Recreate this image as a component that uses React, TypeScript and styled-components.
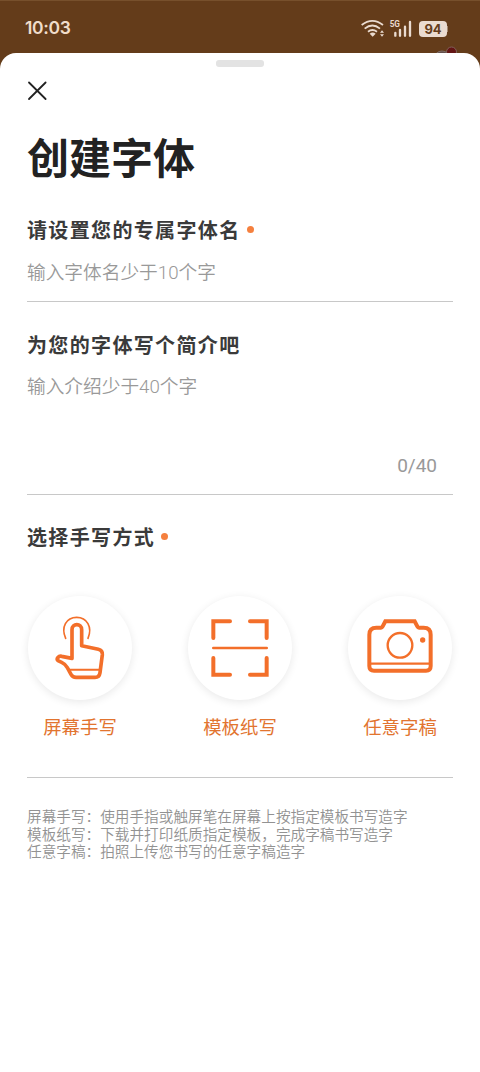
import React from "react";
import styled, { createGlobalStyle } from "styled-components";

const ORANGE = "#f36f2a";

const GlobalStyle = createGlobalStyle`
  * { box-sizing: border-box; }
  body {
    margin: 0;
    background: #643c1a;
    font-family: Roboto, "Noto Sans CJK SC", sans-serif;
  }
`;

const Screen = styled.div`
  width: 480px;
  height: 1072px;
  display: flex;
  flex-direction: column;
  overflow: hidden;
  background: #643c1a;
`;

const StatusBar = styled.header`
  position: relative;
  flex: none;
  height: 53px;
  padding: 2px 33px 0 25px;
  display: flex;
  align-items: center;
  justify-content: space-between;
  box-shadow: inset 0 1px 0 #77502c;
`;

const Clock = styled.span`
  font: 600 17.5px/24px Inter, sans-serif;
  letter-spacing: -0.3px;
  color: #f0dcca;
`;

const StatusIcons = styled.div`
  display: flex;
  align-items: center;
  height: 20px;
`;

const Battery = styled.div`
  position: relative;
  width: 28px;
  height: 16px;
  margin-left: 7px;
  margin-top: 2px;
  border-radius: 4px;
  background: #eadbd0;
  color: #643c1a;
  font: 700 13px/16.5px Inter, sans-serif;
  letter-spacing: -0.2px;
  text-align: center;
  &::after {
    content: "";
    position: absolute;
    right: -1px;
    top: 5px;
    width: 1px;
    height: 6px;
    background: #a58a73;
  }
`;

const HiddenBadge = styled.svg`
  position: absolute;
  left: 434px;
  top: 45px;
`;

const Sheet = styled.main`
  position: relative;
  flex: 1;
  display: flex;
  flex-direction: column;
  padding: 7px 27px 0;
  border-radius: 16px 16px 0 0;
  background: #fff;
`;

const Handle = styled.div`
  flex: none;
  align-self: center;
  width: 48px;
  height: 7px;
  border-radius: 3px;
  background: #e3e3e3;
`;

const CloseButton = styled.button`
  align-self: flex-start;
  width: 20px;
  height: 20px;
  margin-top: 14px;
  padding: 0;
  border: 0;
  background: none;
  svg { display: block; }
`;

const Title = styled.h1`
  margin: 25px 0 2px;
  font: 700 42px/60px "Noto Sans CJK SC", sans-serif;
  color: #222;
`;

const Field = styled.section<{ $height: number; $top: number }>`
  flex: none;
  display: flex;
  flex-direction: column;
  height: ${(p) => p.$height}px;
  padding-top: ${(p) => p.$top}px;
  border-bottom: 1.5px solid #c8c8c8;
`;

const Heading = styled.h2`
  display: flex;
  align-items: center;
  gap: 6px;
  margin: 0;
  font: 700 20px/30px "Noto Sans CJK SC", sans-serif;
  letter-spacing: 1.35px;
  color: #3a3a3a;
`;

const RequiredDot = styled.i`
  width: 7px;
  height: 7px;
  margin-top: -2px;
  border-radius: 50%;
  background: #f5803e;
`;

const Hint = styled.p<{ $top: number }>`
  margin: ${(p) => p.$top}px 0 0;
  font-size: 18.7px;
  font-weight: 350;
  line-height: 24px;
  color: #999;
`;

const Counter = styled.span`
  margin: auto 16px 16px auto;
  font-size: 19px;
  line-height: 24px;
  color: #999;
`;

const Options = styled.div`
  display: flex;
  justify-content: space-between;
  margin: 44px 1px 0;
`;

const Option = styled.button`
  width: 104px;
  padding: 0;
  border: 0;
  background: none;
  display: flex;
  flex-direction: column;
  align-items: center;
  gap: 14px;
  font: 400 18.4px/24px "Noto Sans CJK SC", sans-serif;
  color: #e2742f;
`;

const Disc = styled.span`
  display: block;
  width: 104px;
  height: 104px;
  border-radius: 50%;
  background: #fff;
  box-shadow: 0 2px 8px rgba(0, 0, 0, 0.09);
  svg { display: block; }
`;

const Notes = styled.div`
  margin-top: 29px;
  font: 350 14.65px/17.5px "Noto Sans CJK SC", sans-serif;
  color: #929292;
  white-space: nowrap;
`;

const Note = styled.p`
  margin: 0;
`;

const Drawing = ({ children }: { children: React.ReactNode }) => (
  <svg
    width="104"
    height="104"
    viewBox="54 48 312 312"
    fill="none"
    stroke={ORANGE}
    strokeLinecap="round"
    strokeLinejoin="round"
  >
    {children}
  </svg>
);

const HandIcon = () => (
  <Drawing>
    <path strokeWidth="5" d="M167 175C152 142 169 112 200 112S248 142 234 175" />
    <path
      strokeWidth="11"
      d="M186 235V149C186 129 215 129 215 149V197L265 208Q278 211 277 224L270 278Q268 292 255 292H198Q188 292 183 283L172 263Q166 252 155 247L144 242C138 237 146 226 155 229L186 235"
    />
    <path strokeWidth="6" d="M178 269H268" />
  </Drawing>
);

const ScanIcon = () => (
  <Drawing>
    <path
      strokeWidth="12"
      strokeLinejoin="miter"
      d="M180 124H130V174M240 124H290V174M130 234V284H180M290 234V284H240"
    />
    <path strokeWidth="8" d="M130 204H290" />
  </Drawing>
);

const CameraIcon = () => (
  <Drawing>
    <path
      strokeWidth="12"
      strokeLinejoin="miter"
      d="M118 164Q118 143 139 143H153Q156 143 158 139L166 124H254L262 139Q264 143 267 143H281Q302 143 302 164V258Q302 272 288 272H132Q118 272 118 258Z"
    />
    <circle cx="210" cy="196" r="37" strokeWidth="7" />
    <path strokeWidth="7" d="M120 251H300" />
    <circle cx="278" cy="180" r="8" fill={ORANGE} stroke="none" />
  </Drawing>
);

const methods = [
  { label: "屏幕手写", icon: <HandIcon /> },
  { label: "模板纸写", icon: <ScanIcon /> },
  { label: "任意字稿", icon: <CameraIcon /> },
];

const notes = [
  "屏幕手写：使用手指或触屏笔在屏幕上按指定模板书写造字",
  "模板纸写：下载并打印纸质指定模板，完成字稿书写造字",
  "任意字稿：拍照上传您书写的任意字稿造字",
];

export default function App() {
  return (
    <Screen>
      <GlobalStyle />
      <StatusBar>
        <Clock>10:03</Clock>
        <StatusIcons>
          <svg width="51" height="20" viewBox="0 0 153 60" fill="none" stroke="#eadbd0">
            <path strokeWidth="5.5" d="M2 21Q34 -4 66 21M11 32Q34 13 57 32M21 41Q34 31 48 41" />
            <path fill="#eadbd0" stroke="none" d="M26 47Q35 40 44 47L35 56ZM57 44L63 37L69 44ZM57 49L63 56L69 49Z" />
            <path strokeWidth="7" strokeLinecap="round" d="M103 45V53M117 36V53M132 26V53M147 12V53" />
            <text x="86" y="26" fontFamily="Roboto, sans-serif" fontSize="27" fontWeight="700" textLength="31" lengthAdjust="spacingAndGlyphs" fill="#eadbd0" stroke="none">5G</text>
          </svg>
          <Battery>94</Battery>
        </StatusIcons>
        <HiddenBadge width="26" height="10" viewBox="0 0 26 10">
          <circle cx="8" cy="14" r="8" fill="#64514c" stroke="#806d67" />
          <circle cx="17.5" cy="7" r="5" fill="#641514" stroke="#80615b" />
        </HiddenBadge>
      </StatusBar>
      <Sheet>
        <Handle />
        <CloseButton aria-label="关闭">
          <svg width="20" height="20" viewBox="0 0 20 20" stroke="#222" strokeWidth="1.8" strokeLinecap="round">
            <path d="M2 1.5L18.6 18M18.6 1.5L2 18" />
          </svg>
        </CloseButton>
        <Title>创建字体</Title>
        <Field $height={114} $top={27}>
          <Heading>
            请设置您的专属字体名
            <RequiredDot />
          </Heading>
          <Hint $top={16}>输入字体名少于10个字</Hint>
        </Field>
        <Field $height={193} $top={28}>
          <Heading>为您的字体写个简介吧</Heading>
          <Hint $top={15}>输入介绍少于40个字</Hint>
          <Counter>0/40</Counter>
        </Field>
        <Field $height={283} $top={27}>
          <Heading>
            选择手写方式
            <RequiredDot />
          </Heading>
          <Options>
            {methods.map((m) => (
              <Option key={m.label}>
                <Disc>{m.icon}</Disc>
                {m.label}
              </Option>
            ))}
          </Options>
        </Field>
        <Notes>
          {notes.map((n) => (
            <Note key={n}>{n}</Note>
          ))}
        </Notes>
      </Sheet>
    </Screen>
  );
}
